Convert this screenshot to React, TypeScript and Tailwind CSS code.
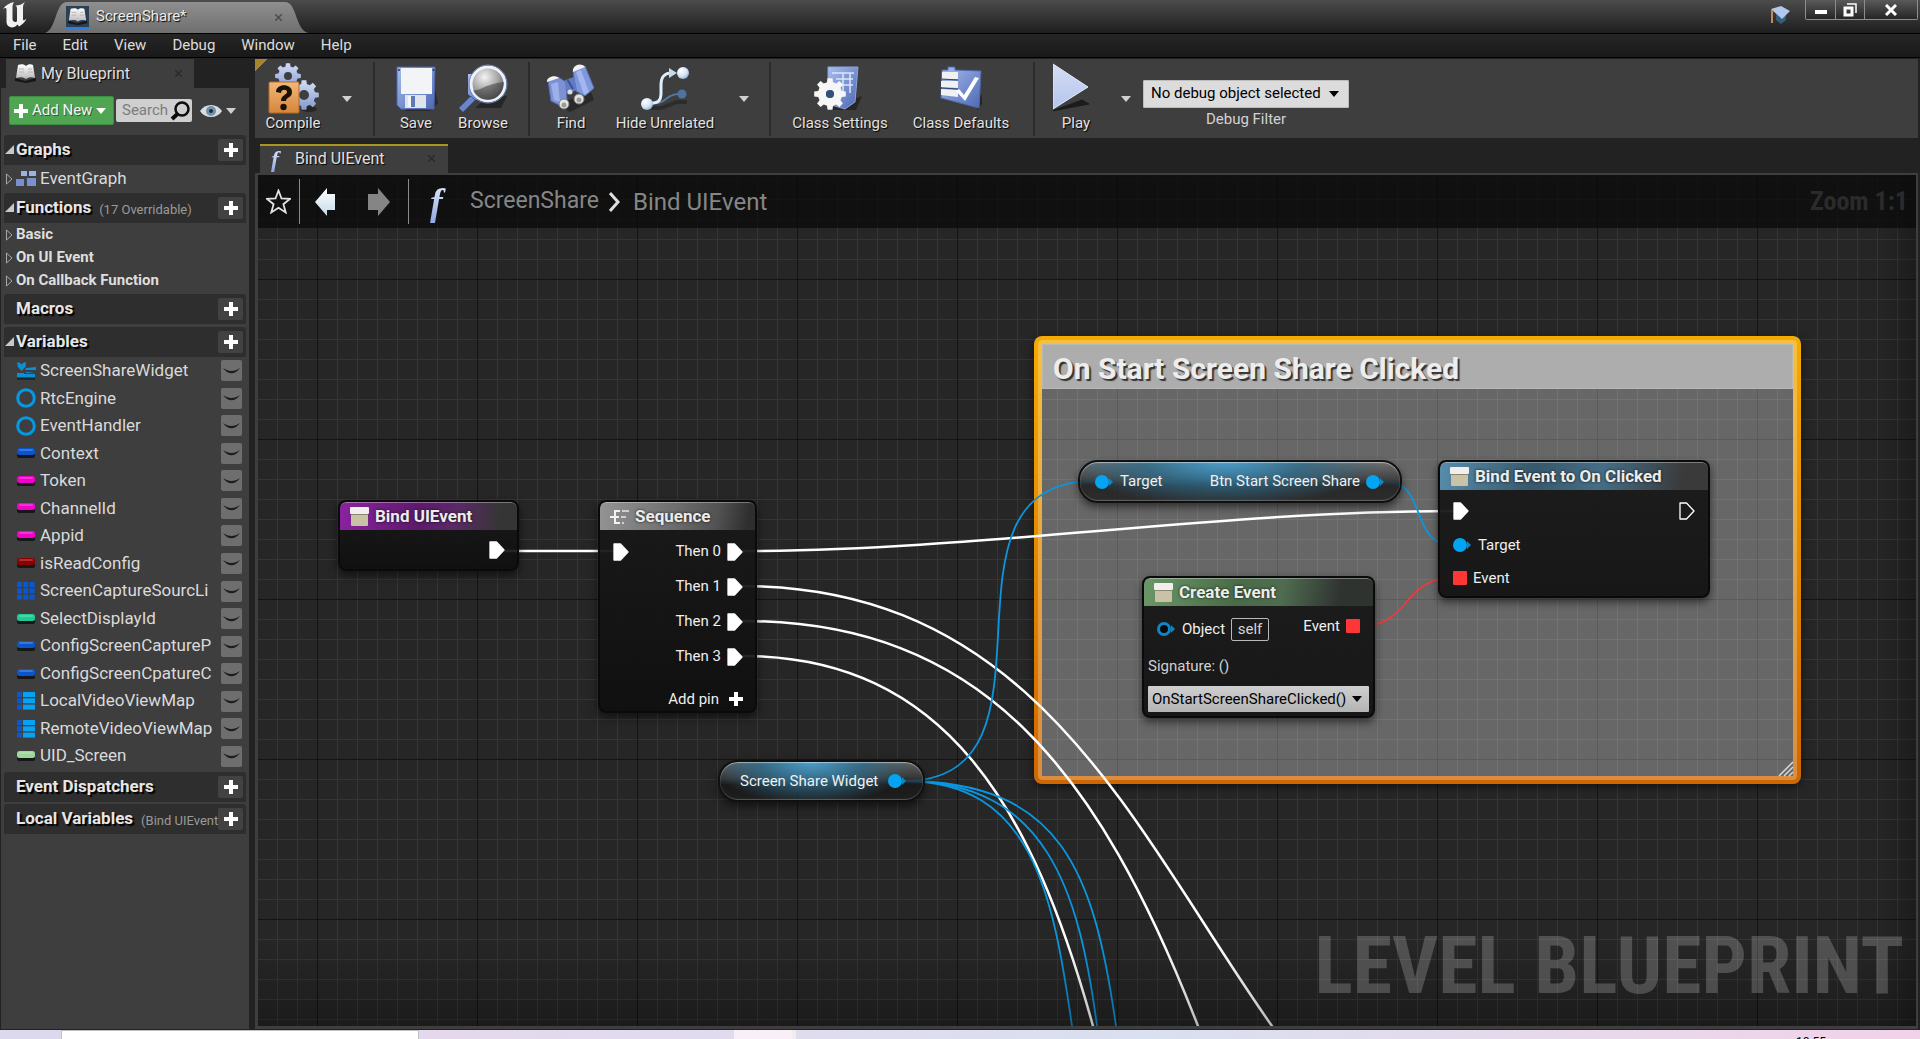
import type { ReactNode } from "react";

/* ---------- small drawings ---------- */

function gearPath(cx: number, cy: number, outer: number, inner: number, teeth: number) {
  const step = (Math.PI * 2) / teeth;
  const at = (r: number, a: number) => `${(cx + r * Math.cos(a)).toFixed(2)} ${(cy + r * Math.sin(a)).toFixed(2)}`;
  let d = "";
  for (let i = 0; i < teeth; i++) {
    const a = i * step - Math.PI / 2;
    d += `${i === 0 ? "M" : "L"}${at(inner, a - step * 0.32)}L${at(outer, a - step * 0.2)}L${at(outer, a + step * 0.2)}L${at(inner, a + step * 0.32)}`;
  }
  return d + "Z";
}

function Gear({ cx, cy, r, hole, fill }: { cx: number; cy: number; r: number; hole: number; fill: string }) {
  const h = `M${cx - hole} ${cy}a${hole} ${hole} 0 1 0 ${hole * 2} 0a${hole} ${hole} 0 1 0 ${-hole * 2} 0Z`;
  return <path d={gearPath(cx, cy, r, r * 0.76, 8) + h} fillRule="evenodd" fill={fill} />;
}

function Defs() {
  return (
    <svg className="absolute size-0" aria-hidden="true">
      <defs>
        <linearGradient id="steel" x1="0" y1="0" x2="0" y2="1">
          <stop offset="0" stopColor="#d3def6" />
          <stop offset="1" stopColor="#8399d0" />
        </linearGradient>
        <linearGradient id="playfill" x1="0" y1="0" x2="0" y2="1">
          <stop offset="0" stopColor="#d5def4" />
          <stop offset="1" stopColor="#b3c4ec" />
        </linearGradient>
        <linearGradient id="blueprint" x1="0" y1="0" x2="1" y2="1">
          <stop offset="0" stopColor="#a9bdf0" />
          <stop offset="1" stopColor="#4d68b4" />
        </linearGradient>
        <linearGradient id="orange" x1="0" y1="0" x2="0" y2="1">
          <stop offset="0" stopColor="#f3b878" />
          <stop offset="1" stopColor="#d5853b" />
        </linearGradient>
        <linearGradient id="page" x1="0" y1="0" x2="0" y2="1">
          <stop offset="0" stopColor="#ffffff" />
          <stop offset="1" stopColor="#b9b9b9" />
        </linearGradient>
        <linearGradient id="ice" x1="0" y1="0" x2="0" y2="1">
          <stop offset="0" stopColor="#ffffff" />
          <stop offset="1" stopColor="#c4dbe8" />
        </linearGradient>
        <radialGradient id="lens" cx="0.4" cy="0.3" r="0.8">
          <stop offset="0" stopColor="#f4f4f4" />
          <stop offset="0.5" stopColor="#a5a5a5" />
          <stop offset="1" stopColor="#444444" />
        </radialGradient>
        <radialGradient id="ball" cx="0.35" cy="0.3" r="0.8">
          <stop offset="0" stopColor="#ffffff" />
          <stop offset="0.6" stopColor="#d3e3f5" />
          <stop offset="1" stopColor="#7fa0c8" />
        </radialGradient>
      </defs>
    </svg>
  );
}

const CompileIcon = () => (
  <svg width="52" height="52" viewBox="0 0 52 52">
    <ellipse cx="42" cy="47" rx="8" ry="3" fill="#1c1c1c" opacity="0.7" />
    <Gear cx={21} cy={14} r={13} hole={4} fill="url(#steel)" />
    <Gear cx={37} cy={33} r={15} hole={5} fill="url(#steel)" />
    <rect x="2" y="20" width="30" height="31" rx="1" fill="url(#orange)" stroke="#b06a28" />
    <path d="M9 30c0-9 16-9 16 0c0 6-6 5-6 9h-5c0-6 6-6 6-9c0-3-6-3-6 1z" fill="#1a1208" />
    <circle cx="16.500" cy="45" r="3.200" fill="#1a1208" />
  </svg>
);

const SaveIcon = () => (
  <svg width="48" height="52" viewBox="-1 1 48 52">
    <path d="M40 20l5 22-8 8H12z" fill="#1c1c1c" opacity="0.6" />
    <path d="M4 6h38l-1 42H8l-4-4z" fill="url(#blueprint)" stroke="#4c64a8" />
    <path d="M8 7h31v26H8z" fill="#f3f4f6" />
    <path d="M12 34h21v13H12z" fill="#dfe3ea" />
    <path d="M15 35h7v11h-7z" fill="#6178b6" />
    <path d="M15 35h3v11h-3z" fill="#f3f4f6" />
    <circle cx="6" cy="9" r="1" fill="#24325e" />
    <circle cx="40.500" cy="9" r="1" fill="#24325e" />
  </svg>
);

const BrowseIcon = () => (
  <svg width="52" height="52" viewBox="0 0 52 52">
    <path d="M34 32l16 2-6 12H18z" fill="#1c1c1c" opacity="0.7" />
    <path d="M11 12h37l-1 22-30 4-6-6z" fill="url(#blueprint)" />
    <path d="M2 46L14 34l4 4L6 50z" fill="#6d86c8" stroke="#48609f" />
    <circle cx="31" cy="22" r="17" fill="url(#lens)" stroke="#eef2fb" strokeWidth="3" />
    <circle cx="31" cy="22" r="19" fill="none" stroke="#7388bb" strokeWidth="1" />
    <path d="M16 28c6 2 12-6 31-8c0 9-6 18-16 18c-7 0-13-4-15-10z" fill="#2f2f2f" opacity="0.5" />
  </svg>
);

const FindIcon = () => (
  <svg width="52" height="52" viewBox="0 0 52 52">
    <path d="M12 42l34-12 3 8-24 12z" fill="#1c1c1c" opacity="0.6" />
    <path d="M3 18l10-3 8 5 1 19-8 4-8-4z" fill="#7b91d4" stroke="#566db0" />
    <path d="M6 22l7-2 2 20-6-2z" fill="#9db0ea" />
    <path d="M28 9l12-5 9 22-9 8-9-5z" fill="#7f97dc" stroke="#566db0" />
    <path d="M31 10l5-2 8 22-5 3z" fill="#a3b6ee" />
    <path d="M20 18l9-3 3 13-10 4z" fill="#627bc4" />
    <path d="M22 17l6 10" stroke="#3d5293" strokeWidth="2" />
    <path d="M2 20c-1-5 8-8 12-4zM28 10c-1-7 8-10 12-5z" fill="#f2f2ee" />
    <circle cx="19" cy="42" r="5" fill="#e4e4e0" stroke="#7b7b78" />
    <circle cx="34" cy="37" r="5" fill="#e4e4e0" stroke="#7b7b78" />
    <circle cx="19" cy="43" r="2.500" fill="#9a9a98" />
    <circle cx="34" cy="38" r="2.500" fill="#9a9a98" />
    <circle cx="25" cy="30" r="2.500" fill="#dcdcda" />
  </svg>
);

const HideIcon = () => (
  <svg width="52" height="52" viewBox="0 0 52 52">
    <path d="M10 46h12l16-6h10" fill="none" stroke="#222" strokeWidth="4" opacity="0.6" />
    <path d="M10 41c20 2 14-9 31-9" fill="none" stroke="#54779e" strokeWidth="2" />
    <path d="M9 41c10 1 13-2 13-10v-8c0-8 3-12 11-12" fill="none" stroke="#dff0fb" strokeWidth="3" />
    <path d="M30 6l8 5-8 5z" fill="#c4dcee" />
    <circle cx="8" cy="42" r="6" fill="url(#ball)" />
    <circle cx="44" cy="11" r="6" fill="url(#ball)" />
    <circle cx="43" cy="32" r="4.500" fill="#4f739f" />
  </svg>
);

const SettingsIcon = () => (
  <svg width="52" height="52" viewBox="0 0 52 52">
    <path d="M12 48h30l6-14z" fill="#1c1c1c" opacity="0.7" />
    <path d="M14 5h30l-3 35-10 7-17-5z" fill="url(#blueprint)" stroke="#8da3dc" />
    <path d="M18 11h22M22 17h17M24 23h15M29 11v20M36 11v20" stroke="#dbe5fb" strokeWidth="1.500" fill="none" />
    <Gear cx={16} cy={32} r={16} hole={4} fill="#f6f6f6" />
    <circle cx="16" cy="32" r="4" fill="#2f4f7c" />
  </svg>
);

const DefaultsIcon = () => (
  <svg width="52" height="52" viewBox="0 0 52 52">
    <path d="M40 44l7-12v10l-4 6z" fill="#1c1c1c" opacity="0.7" />
    <path d="M7 8h6V5h7v3l26 1-2 37-38-10z" fill="url(#blueprint)" stroke="#5169ab" />
    <path d="M7 10h16v7H7zM6 19h17v7L6 25zM6 27l17 1v7L6 33z" fill="#f1f1f1" />
    <path d="M7 17l16 1M6 26l17 1" stroke="#2f3f6e" />
    <path d="M24 27l5 6 11-18 4 1-14 23-9-10z" fill="#ffffff" />
  </svg>
);

const PlayIcon = () => (
  <svg width="46" height="52" viewBox="6 1 46 52">
    <path d="M5 50l37-7-7-4z" fill="#1c1c1c" stroke="#1c1c1c" />
    <path d="M6 3l35 23L6 48z" fill="url(#playfill)" stroke="#e2e9fa" />
  </svg>
);

const UnrealLogo = () => (
  <svg width="26" height="26" viewBox="0 0 26 26" aria-label="Unreal">
    <path
      fill="#f2f2f2"
      d="M1 7C4 3 7 1 12 0C11 2 10.500 3 10.500 5V17C10.500 19 12 20 13.500 20C14.500 20 15 19.500 15 18V7C15 5 14.500 4 13.500 3.500C17 3.500 20 2.500 23 0C21.500 2 21 3.500 21 5.500V17C21 19 22.500 18.500 24.500 16.500C23 20.500 20 22.500 17 24.500L15.500 22.500C14 24.500 12 25.500 9.500 25.500C6.500 25 4.500 23 4.500 20V7.500C4.500 5.500 3 5.500 1 7Z"
    />
  </svg>
);

const BookIcon = ({ boxed }: { boxed?: boolean }) => (
  <svg width="23" height="23" viewBox="0 0 23 23" className={boxed ? "border-b-2 border-[#2f7de0] bg-[#2c3f55]" : ""}>
    <path d="M1 16l10 3 11-3v3l-10 2-11-2z" fill="#161616" />
    <path d="M4 3c3-1 6-1 8 1v13c-3-2-6-2-10-1z" fill="url(#page)" />
    <path d="M12 4c2-2 5-2 7-1l2 13c-3-1-6-1-9 1z" fill="url(#page)" />
    <path d="M5 7h5M5 10h5M14 7h4M14 10h5" stroke="#b5b5b5" strokeWidth="1" />
  </svg>
);

const Fn = ({ className }: { className: string }) => (
  <span
    aria-hidden="true"
    className={`bg-gradient-to-b from-[#eaf1ff] to-[#8ea6e0] bg-clip-text px-1 font-['Liberation_Serif',serif] italic text-transparent ${className}`}
  >
    f
  </span>
);

const Plus = ({ className = "size-[14px]" }: { className?: string }) => (
  <svg viewBox="0 0 14 14" className={className} fill="#fff">
    <path d="M5 0h4v5h5v4H9v5H5V9H0V5h5z" />
  </svg>
);

const Caret = ({ fill = "#d0d0d0" }: { fill?: string }) => (
  <svg width="10" height="6" viewBox="0 0 10 6" fill={fill}>
    <path d="M0 0h10L5 6z" />
  </svg>
);

const Cross = () => (
  <svg width="7" height="7" viewBox="0 0 7 7" stroke="#2a2a2a" strokeWidth="1.500">
    <path d="M0 0l7 7M7 0L0 7" />
  </svg>
);

const EventBox = () => (
  <svg width="19" height="19" viewBox="0 0 19 19" className="shrink-0">
    <rect x="0" y="0" width="19" height="7" rx="1" fill="#f1efee" />
    <rect x="1" y="7" width="17" height="12" rx="1" fill="#c9c2a6" />
    <rect x="1" y="7" width="17" height="1" fill="#8d876f" />
  </svg>
);

const ExecPin = ({ hollow }: { hollow?: boolean }) => (
  <svg width="16" height="18" viewBox="0 0 16 18" className="shrink-0">
    <path d="M1 1h6.500L15 9l-7.500 8H1z" fill={hollow ? "none" : "#fff"} stroke="#fff" strokeWidth="1.300" strokeLinejoin="round" />
  </svg>
);

const ObjectPin = ({ hollow }: { hollow?: boolean }) => (
  <svg width="18" height="14" viewBox="0 0 18 14" className="shrink-0">
    {hollow ? (
      <circle cx="7" cy="7" r="5.500" fill="#0a0a0a" stroke="#0f86c6" strokeWidth="3" />
    ) : (
      <circle cx="7" cy="7" r="7" fill="#04a4f3" />
    )}
    <path d="M14 3l4 4-4 4z" fill="#0b86c4" />
  </svg>
);

const DelegatePin = () => <span className="size-[14px] shrink-0 rounded-[1px] bg-[#ff3636]" />;

/* ---------- left panel ---------- */

type VarKind = "widget" | "ring" | "pill" | "array" | "map";
const variables: { name: string; kind: VarKind; color: string }[] = [
  { name: "ScreenShareWidget", kind: "widget", color: "#0d8fd4" },
  { name: "RtcEngine", kind: "ring", color: "#0598e4" },
  { name: "EventHandler", kind: "ring", color: "#0598e4" },
  { name: "Context", kind: "pill", color: "#0a55cc" },
  { name: "Token", kind: "pill", color: "#f000c8" },
  { name: "ChannelId", kind: "pill", color: "#f000c8" },
  { name: "Appid", kind: "pill", color: "#f000c8" },
  { name: "isReadConfig", kind: "pill", color: "#8c0000" },
  { name: "ScreenCaptureSourcLi", kind: "array", color: "#0a58d0" },
  { name: "SelectDisplayId", kind: "pill", color: "#1fc995" },
  { name: "ConfigScreenCaptureP", kind: "pill", color: "#0a55cc" },
  { name: "ConfigScreenCpatureC", kind: "pill", color: "#0a55cc" },
  { name: "LocalVideoViewMap", kind: "map", color: "#0a58d0" },
  { name: "RemoteVideoViewMap", kind: "map", color: "#0a58d0" },
  { name: "UID_Screen", kind: "pill", color: "#9cd69a" },
];

function VarIcon({ kind, color }: { kind: VarKind; color: string }) {
  return (
    <svg width="20" height="20" viewBox="0 0 20 20" className="shrink-0" fill={color}>
      {kind === "widget" && (
        <>
          <path d="M1 1l3 1 1.500 1.500L7 2l3-1-.5 5L5.500 10 2 6z" />
          <path d="M10 7l10-1v3H9zM1 12h8l2-1 8 1v4H1z" />
          <path d="M8 12.500h11" stroke="#3e3e3e" />
          <path d="M1 17h18v2H1z" fill="#1d2a33" />
        </>
      )}
      {kind === "ring" && <circle cx="10" cy="10" r="8.300" fill="none" stroke={color} strokeWidth="3" />}
      {kind === "pill" && (
        <>
          <rect x="1" y="8" width="18" height="7" rx="2" fill="#171717" />
          <rect x="1" y="5" width="18" height="7" rx="2.500" />
          <rect x="3" y="6" width="14" height="2" rx="1" fill="#fff" opacity="0.2" />
        </>
      )}
      {kind === "array" &&
        [0, 1, 2].map((r) => [0, 1, 2].map((c) => <rect key={`${r}${c}`} x={1 + c * 6.3} y={1 + r * 6.3} width="5" height="5" />))}
      {kind === "map" &&
        [0, 1, 2].map((r) => (
          <g key={r}>
            <rect x="1" y={1 + r * 6.3} width="5" height="5" />
            <rect x="7" y={1 + r * 6.3} width="12" height="5" fill="#06a2f4" />
          </g>
        ))}
    </svg>
  );
}

const Open = () => (
  <svg width="9" height="10" viewBox="0 0 9 10" className="shrink-0" fill="#c8c8c8">
    <path d="M9 0v9H0z" />
  </svg>
);
const Closed = () => (
  <svg width="9" height="12" viewBox="0 0 9 12" className="shrink-0" fill="none" stroke="#a8a8a8">
    <path d="M1.500 1v10L7 6z" />
  </svg>
);

function Section({ title, note, open, className = "" }: { title: string; note?: string; open?: boolean; className?: string }) {
  return (
    <div className={`flex h-[30px] shrink-0 items-center rounded-t-[3px] bg-[#2e2e2e] pr-[3px] pl-px ${className}`}>
      <span className="flex w-[11px] shrink-0">{open && <Open />}</span>
      <h2 className="shrink-0 text-[17px] font-bold text-[#e6e6e6] [text-shadow:2px_2px_1px_#000]">{title}</h2>
      <span className="ml-2 min-w-0 flex-1 pt-1 text-[13px] whitespace-nowrap text-[#9a9a9a]">{note}</span>
      <button aria-label={`Add to ${title}`} className="grid h-[22px] w-[25px] shrink-0 place-items-center rounded-[2px] bg-[#424242]">
        <Plus />
      </button>
    </div>
  );
}

function BlueprintPanel() {
  return (
    <aside className="ml-px flex w-[248px] shrink-0 flex-col">
      <div className="ml-[5px] flex h-[29px] w-[188px] items-center bg-[#3e3e3e] px-2">
        <BookIcon />
        <span className="ml-1 flex-1 text-base text-[#e0e0e0] [text-shadow:1px_1px_1px_#000]">My Blueprint</span>
        <button aria-label="Close My Blueprint" className="mr-1">
          <Cross />
        </button>
      </div>
      <div className="flex flex-1 flex-col bg-[#3e3e3e] px-[3px] pt-2">
        <div className="mb-[10px] flex items-center pl-[5px]">
          <button className="flex h-[29px] w-[105px] items-center gap-1 rounded-[2px] border border-[#3d8f40] bg-[#4fa552] px-1 text-[15px] text-[#f4f4f4] [text-shadow:1px_1px_0_#2b5c2c]">
            <Plus />
            Add New
            <Caret fill="#fff" />
          </button>
          <label className="ml-[2px] flex h-[23px] w-[76px] items-center rounded-[2px] bg-[#cfcfcf] pr-px pl-[6px]">
            <input placeholder="Search" aria-label="Search" className="w-[48px] bg-transparent text-[15px] outline-none placeholder:text-[#7c7c7c]" />
            <svg width="20" height="20" viewBox="0 0 20 20" fill="none" stroke="#0d0d0d">
              <circle cx="12" cy="8" r="6.500" strokeWidth="2.500" />
              <path d="M8 12.500L2 18" strokeWidth="4" />
            </svg>
          </label>
          <button aria-label="View options" className="ml-2 flex items-center gap-1">
            <svg width="22" height="14" viewBox="0 0 22 14">
              <path d="M0 7C5-1 17-1 22 7C17 15 5 15 0 7Z" fill="#d9dde0" />
              <circle cx="11" cy="7" r="5" fill="#6f93ad" />
              <circle cx="11" cy="7" r="2" fill="#1c2d3a" />
            </svg>
            <Caret />
          </button>
        </div>

        <Section title="Graphs" open />
        <button className="flex h-[28px] items-center pl-px text-[17px] text-[#dadada]">
          <Closed />
          <svg width="20" height="18" viewBox="0 0 20 18" className="mr-[4px] ml-[2px]">
            <path d="M7 4h8M10 4v9M4 12h12" stroke="#34496e" fill="none" />
            <path d="M5 1h6v5H5zM13 1h7v5h-7z" fill="#9db2e2" />
            <path d="M0 9h8v7H0zM11 8h9v8h-9z" fill="#7890cc" />
          </svg>
          EventGraph
        </button>
        <Section title="Functions" note="(17 Overridable)" open />
        {["Basic", "On UI Event", "On Callback Function"].map((t) => (
          <button key={t} className="flex h-[23px] items-center gap-[2px] pl-px text-[15px] font-bold text-[#dedede]">
            <Closed />
            {t}
          </button>
        ))}
        <Section title="Macros" className="mt-[2px]" />
        <Section title="Variables" open className="mt-[3px]" />
        <ul className="grid h-[413px] auto-rows-fr">
          {variables.map((v) => (
            <li key={v.name} className="flex items-center pr-1 pl-3">
              <VarIcon kind={v.kind} color={v.color} />
              <span className="ml-1 whitespace-nowrap text-[17px] text-[#dadada]">{v.name}</span>
              <button aria-label={`Toggle visibility of ${v.name}`} className="ml-auto grid size-[21px] shrink-0 place-items-center rounded-[2px] bg-[#6e6e6e]">
                <svg width="17" height="6" viewBox="0 0 17 6" fill="#1d1d1d">
                  <path d="M0 0c6 4 11 4 17 0c-5 7-12 7-17 0z" />
                </svg>
              </button>
            </li>
          ))}
        </ul>
        <Section title="Event Dispatchers" className="mt-[2px]" />
        <Section title="Local Variables" note="(Bind UIEvent" className="mt-[2px]" />
      </div>
    </aside>
  );
}

/* ---------- toolbar ---------- */

function Tool({ label, width, children }: { label: string; width: string; children: ReactNode }) {
  return (
    <button className={`flex h-full shrink-0 flex-col items-center pt-[3px] ${width}`}>
      {children}
      <span className="text-[15px] leading-[18px] whitespace-nowrap text-[#e2e2e2] [text-shadow:1px_1px_1px_#000]">{label}</span>
    </button>
  );
}

const Divider = () => <span className="h-[74px] w-[2px] shrink-0 bg-[#2b2b2b]" />;

function Toolbar() {
  return (
    <div className="flex h-[79px] items-center bg-[linear-gradient(135deg,#a8842a_9px,transparent_9px)] bg-[#3e3e3e]">
      <Tool label="Compile" width="w-[76px]"><CompileIcon /></Tool>
      <button aria-label="Compile options" className="grid w-[32px] place-items-center"><Caret /></button>
      <span className="w-[10px]" />
      <Divider />
      <Tool label="Save" width="w-[82px]"><SaveIcon /></Tool>
      <Tool label="Browse" width="w-[52px]"><BrowseIcon /></Tool>
      <span className="w-[19px]" />
      <Divider />
      <Tool label="Find" width="w-[82px]"><FindIcon /></Tool>
      <Tool label="Hide Unrelated" width="w-[106px]"><HideIcon /></Tool>
      <button aria-label="Hide unrelated options" className="grid w-[51px] place-items-center"><Caret /></button>
      <Divider />
      <Tool label="Class Settings" width="w-[138px]"><SettingsIcon /></Tool>
      <Tool label="Class Defaults" width="w-[104px]"><DefaultsIcon /></Tool>
      <span className="w-[20px]" />
      <Divider />
      <Tool label="Play" width="w-[82px]"><PlayIcon /></Tool>
      <button aria-label="Play options" className="grid w-[18px] place-items-center"><Caret /></button>
      <div className="ml-2 flex flex-col items-center pt-[10px]">
        <span className="relative flex">
          <select id="debug" className="h-[28px] w-[206px] appearance-none rounded-[1px] border border-[#bdbdbd] bg-[#dcdcdc] px-[7px] text-[15px] text-black">
            <option>No debug object selected</option>
          </select>
          <span className="pointer-events-none absolute top-[11px] right-[10px]"><Caret fill="#000" /></span>
        </span>
        <label htmlFor="debug" className="mt-[2px] text-[15px] leading-[18px] text-[#d2d2d2]">Debug Filter</label>
      </div>
    </div>
  );
}

/* ---------- graph ---------- */

function Node({ title, icon, tint, place, children }: { title: string; icon: ReactNode; tint: string; place: string; children: ReactNode }) {
  return (
    <section className={`absolute flex flex-col overflow-hidden rounded-[8px] border-2 border-[#0a0a0a] bg-[#0e0e0e]/90 bg-gradient-to-b from-[#202020]/60 to-transparent shadow-[0_4px_8px_rgba(0,0,0,0.55)] ${place}`}>
      <header className={`flex h-[28px] shrink-0 items-center gap-[6px] rounded-t-[6px] border-t border-white/35 px-[10px] text-[17px] font-bold text-[#ececec] [text-shadow:0_0_3px_rgba(0,0,0,0.8)] ${tint}`}>
        {icon}
        {title}
      </header>
      {children}
    </section>
  );
}

const pill =
  "absolute flex items-center rounded-[20px] border-2 border-[#101010] bg-[radial-gradient(ellipse_50%_110%_at_45%_0%,#4a9cc8_0%,#2f6d8dcc_50%,transparent_100%),linear-gradient(to_bottom,#707070c8_0%,#3c3c3cc8_40%,#161616c8_60%,#1c1c1cc8_100%)] text-[15px] text-[#f0f0f0] shadow-[0_4px_8px_rgba(0,0,0,0.55),inset_0_1px_1px_rgba(255,255,255,0.5),inset_0_-1px_1px_rgba(255,255,255,0.25)]";

function Wires() {
  return (
    <svg className="absolute inset-0 size-full" fill="none" aria-hidden="true">
      <g transform="translate(-258 -175)">
        <g stroke="#fff" strokeWidth="2.500">
          <path d="M504 551H613" />
          <path d="M742 551C980 551 1215 511 1453 511" />
          <path d="M742 586C1233 586 1177 1264 1668 1264" />
          <path d="M742 621C982 621 1098 769 1198 1026l4 10" />
          <path d="M742 656C947 656 1033 810 1093 1026l3 10" />
        </g>
        <g stroke="#0a97e0" strokeWidth="1.800">
          <path d="M904 781C1077 781 919 481 1094 481" />
          <path d="M904 781C1062 781 1094 872 1116 1026l1 10" />
          <path d="M904 781C1047 781 1079 891 1097 1026l1 10" />
          <path d="M904 781C1032 781 1053 893 1072 1026l1 10" />
          <path d="M1384 481C1429 481 1408 545 1453 545" />
        </g>
        <path d="M1360 626C1412 626 1401 578 1453 578" stroke="#ea3c3c" strokeWidth="1.800" />
      </g>
    </svg>
  );
}

function Graph() {
  return (
    <div className="relative min-h-[851px] flex-1 overflow-hidden bg-[#262626] bg-[linear-gradient(to_right,#141414_1px,transparent_1px),linear-gradient(to_bottom,#141414_1px,transparent_1px),linear-gradient(to_right,#353535_1px,transparent_1px),linear-gradient(to_bottom,#353535_1px,transparent_1px)] bg-[length:160px_160px,160px_160px,20px_20px,20px_20px] bg-[position:59px_0,0_104px,19px_0,0_4px]">
      {/* comment box */}
      <section className="absolute top-[161px] left-[776px] h-[448px] w-[767px] rounded-[8px] bg-white/30 p-2 shadow-[0_3px_8px_rgba(0,0,0,0.5)]">
        <h3 className="flex h-[45px] items-center border border-[#b8b8b8] bg-[#adadad] pt-1 pl-[10px] text-[30px] font-bold text-[#ededed] [text-shadow:2px_2px_1px_#333]">
          On Start Screen Share Clicked
        </h3>
        <div className="absolute inset-0 rounded-[8px] bg-gradient-to-b from-[#f5ab00] to-[#cf6600] p-2 [mask:linear-gradient(#000_0_0)_content-box_exclude,linear-gradient(#000_0_0)]" />
        <div className="absolute inset-1 rounded-[4px] bg-white/25 p-1 [mask:linear-gradient(#000_0_0)_content-box_exclude,linear-gradient(#000_0_0)]" />
        <svg width="16" height="16" viewBox="0 0 16 16" className="absolute right-[7px] bottom-[7px]" stroke="#d8d8d8" strokeWidth="1.500">
          <path d="M1 15L15 1M6 15l9-9M11 15l4-4" />
        </svg>
      </section>

      <Wires />

      <Node title="Bind UIEvent" icon={<EventBox />} place="top-[325px] left-[80px] h-[71px] w-[181px]" tint="bg-[linear-gradient(100deg,#8a239f_0%,#5d1a6c_45%,#5a2a66_65%,#353535_90%)]">
        <div className="flex flex-1 items-center justify-end pr-[12px]">
          <ExecPin />
        </div>
      </Node>

      <Node
        title="Sequence"
        place="top-[325px] left-[340px] h-[213px] w-[159px]"
        tint="bg-[linear-gradient(100deg,#949494_0%,#707070_45%,#525252_75%,#2e2e2e_95%)]"
        icon={
          <svg width="19" height="16" viewBox="0 0 19 16" fill="none" stroke="#f2f2f2" strokeWidth="2">
            <path d="M0 8h9M5 1v14M5 2h5M5 14h5" />
            <path d="M12 2h7M11 8h5M12 14h2" stroke="#d0d0d0" />
          </svg>
        }
      >
        <div className="flex flex-1 justify-between pt-[4px] pr-[12px] pl-[13px] text-[15px] text-[#eeeeee]">
          <span className="flex h-[35px] items-center"><ExecPin /></span>
          <div className="flex flex-col items-end">
            {[0, 1, 2, 3].map((n) => (
              <span key={n} className="flex h-[35px] items-center gap-[6px]">
                Then {n}
                <ExecPin />
              </span>
            ))}
            <button className="mt-[9px] flex h-[32px] items-center gap-[10px]">
              Add pin
              <Plus />
            </button>
          </div>
        </div>
      </Node>

      <div className={`${pill} top-[585px] left-[460px] h-[42px] w-[207px] gap-[10px] pl-[20px]`}>
        Screen Share Widget
        <ObjectPin />
      </div>

      <div className={`${pill} top-[285px] left-[820px] h-[43px] w-[324px] pr-[16px] pl-[15px]`}>
        <ObjectPin />
        <span className="ml-[7px] flex-1">Target</span>
        <span className="mr-[6px]">Btn Start Screen Share</span>
        <ObjectPin />
      </div>

      <Node title="Create Event" icon={<EventBox />} place="top-[401px] left-[884px] h-[142px] w-[233px]" tint="bg-[linear-gradient(100deg,#6b9768_0%,#4a6c48_40%,#4f6c50_60%,#2f3330_85%)]">
        <div className="flex flex-col px-1 text-[15px] text-[#eeeeee]">
          <div className="flex h-[46px] items-center pr-[9px] pl-[9px]">
            <ObjectPin hollow />
            <label htmlFor="self" className="ml-[7px]">Object</label>
            <input id="self" defaultValue="self" className="ml-[6px] h-[23px] w-[38px] rounded-[2px] border border-[#b9b9b9] bg-transparent text-center text-[#d5d5d5] outline-none" />
            <span className="flex flex-1 items-center justify-end gap-[6px] pb-[6px]">
              Event
              <DelegatePin />
            </span>
          </div>
          <p className="mt-1 h-5 leading-5 text-[#d0d0d0]">Signature: ()</p>
          <span className="relative mt-[10px] flex">
            <select aria-label="Signature function" className="h-[26px] w-full appearance-none rounded-[1px] bg-gradient-to-b from-[#cfcfcf] to-[#b4b4b4] px-1 text-[15px] text-black">
              <option>OnStartScreenShareClicked()</option>
            </select>
            <span className="pointer-events-none absolute top-[10px] right-[7px]"><Caret fill="#000" /></span>
          </span>
        </div>
      </Node>

      <Node title="Bind Event to On Clicked" icon={<EventBox />} place="top-[285px] left-[1180px] h-[138px] w-[272px]" tint="bg-[linear-gradient(100deg,#578cab_0%,#38586b_35%,#456e86_60%,#3a3a3a_90%)]">
        <div className="flex flex-col px-[13px] pt-1 text-[15px] text-[#eeeeee]">
          <div className="flex h-[34px] items-center justify-between"><ExecPin /><ExecPin hollow /></div>
          <div className="flex h-[34px] items-center gap-[7px]"><ObjectPin />Target</div>
          <div className="flex h-[32px] items-center gap-[6px]"><DelegatePin />Event</div>
        </div>
      </Node>

      {/* edge vignette and watermark */}
      <div className="pointer-events-none absolute inset-0 bg-gradient-to-b from-transparent from-90% to-black/25 shadow-[inset_-30px_0_40px_-20px_rgba(0,0,0,0.35)]" />
      <p className="pointer-events-none absolute right-[12px] bottom-[14px] font-['Roboto_Condensed',sans-serif] text-[80px] leading-[92px] font-bold text-white/20">LEVEL BLUEPRINT</p>

      {/* breadcrumb bar */}
      <nav aria-label="Breadcrumb" className="relative flex h-[53px] items-center bg-[#0a0a0a]/75 px-2">
        <button aria-label="Add to favourites">
          <svg width="25" height="25" viewBox="0 0 25 25" fill="none" stroke="#e4e4e4" strokeWidth="1.800">
            <path d="M12.500 1.500l3 8 8.500.4-6.600 5.300 2.300 8.200-7.200-4.700-7.200 4.700 2.300-8.200L1 9.900l8.500-.4z" />
          </svg>
        </button>
        <span className="ml-2 h-[45px] w-px bg-[#8a8a8a]" />
        <button aria-label="Back" className="ml-[15px]">
          <svg width="21" height="28" viewBox="0 0 21 28" fill="url(#ice)"><path d="M0 14L12 0v6h8v16h-8v6z" /></svg>
        </button>
        <button aria-label="Forward" className="ml-[32px]">
          <svg width="22" height="28" viewBox="0 0 22 28" fill="#858585"><path d="M22 14L10 0v6H0v16h10v6z" /></svg>
        </button>
        <span className="ml-[18px] h-[45px] w-px bg-[#8a8a8a]" />
        <Fn className="ml-[17px] w-[30px] text-[38px] leading-[44px] font-bold" />
        <a href="#ScreenShare" className="ml-[14px] text-[23px] text-[#868686]">ScreenShare</a>
        <svg width="12" height="20" viewBox="0 0 12 20" fill="none" stroke="#dedede" strokeWidth="3" className="ml-[10px]">
          <path d="M1 1l8 9-8 9" />
        </svg>
        <a href="#Bind-UIEvent" className="ml-[12px] text-[24px] text-[#868686]">Bind UIEvent</a>
        <span className="ml-auto font-['Roboto_Condensed',sans-serif] text-[26px] font-bold text-[#2b2b2b]">Zoom 1:1</span>
      </nav>
    </div>
  );
}

/* ---------- window ---------- */

function TitleBar() {
  return (
    <header className="flex h-[34px] shrink-0 items-start border-b border-black bg-gradient-to-b from-[#4c4c4c] to-[#1f1f1f]">
      <span className="mt-[2px] ml-[2px]"><UnrealLogo /></span>
      <div className="relative mt-[2px] ml-[17px] flex h-[31px] w-[263px] items-center pl-[21px]">
        <svg viewBox="0 0 263 31" preserveAspectRatio="none" className="absolute inset-0 size-full" fill="url(#tab)">
          <defs>
            <linearGradient id="tab" x1="0" y1="0" x2="0" y2="1">
              <stop offset="0" stopColor="#8f8f8f" />
              <stop offset="1" stopColor="#6f6f6f" />
            </linearGradient>
          </defs>
          <path d="M0 31C12 27 10 0 22 0H240C252 0 250 27 263 31Z" />
        </svg>
        <span className="relative"><BookIcon boxed /></span>
        <span className="relative ml-[7px] flex-1 pb-[2px] text-[15px] text-[#ececec] [text-shadow:1px_1px_1px_#000]">ScreenShare*</span>
        <button aria-label="Close tab" className="relative mr-[26px] opacity-60"><Cross /></button>
      </div>
      <span className="flex-1" />
      <svg width="20" height="20" viewBox="0 0 20 20" className="mt-[5px] mr-[15px]">
        <path d="M6 9v6l5 4 5-4V9z" fill="#355f7e" />
        <path d="M1 4l10-3 9 5-8 8z" fill="#b3c8ee" />
        <path d="M1 5h2v13H1z" fill="#c08d56" />
      </svg>
      <div className="mr-[2px] flex h-[20px] divide-x divide-[#8d8d8d] rounded-b-[2px] border border-t-0 border-[#8d8d8d] bg-gradient-to-b from-[#5a5a5a] to-[#262626]">
        <button aria-label="Minimize" className="grid w-[30px] place-items-center pt-1"><span className="h-[4px] w-[12px] bg-white" /></button>
        <button aria-label="Restore" className="grid w-[29px] place-items-center">
          <svg width="14" height="14" viewBox="0 0 14 14" fill="none" stroke="#fff">
            <rect x="2" y="5" width="7" height="7" strokeWidth="3" />
            <path d="M4 1h9v9" strokeWidth="1.500" />
          </svg>
        </button>
        <button aria-label="Close" className="grid w-[52px] place-items-center">
          <svg width="12" height="12" viewBox="0 0 12 12" stroke="#fff" strokeWidth="3"><path d="M1 1l10 10M11 1L1 11" /></svg>
        </button>
      </div>
    </header>
  );
}

export default function App() {
  return (
    <div className="flex min-h-screen flex-col overflow-hidden bg-[#222222] font-['Roboto',sans-serif]">
      <Defs />
      <TitleBar />
      <nav aria-label="Menu" className="flex h-[24px] shrink-0 items-center gap-[26px] border-b border-black bg-gradient-to-b from-[#262626] to-[#191919] pl-[13px] text-[15px] text-[#dcdcdc]">
        {["File", "Edit", "View", "Debug", "Window", "Help"].map((m) => (
          <button key={m}>{m}</button>
        ))}
      </nav>
      <main className="flex flex-1 pt-px">
        <BlueprintPanel />
        <div className="mr-[2px] ml-[6px] flex min-w-0 flex-1 flex-col">
          <Toolbar />
          <div className="mt-[6px] ml-[5px] flex h-[29px] w-[188px] items-center border-t-2 border-[#a8971c] bg-[#3e3e3e] pb-[2px] pl-[7px]">
            <Fn className="w-[22px] text-[24px] leading-[26px] font-bold" />
            <span className="ml-[6px] flex-1 text-base text-[#e0e0e0] [text-shadow:1px_1px_1px_#000]">Bind UIEvent</span>
            <button aria-label="Close Bind UIEvent" className="mr-[13px]"><Cross /></button>
          </div>
          <div className="flex flex-1 flex-col border-2 border-b-[3px] border-l-[3px] border-[#3e3e3e]">
            <Graph />
          </div>
        </div>
      </main>
      <footer className="flex h-[10px] shrink-0 overflow-hidden border-t border-[#222] bg-gradient-to-r from-[#ecd3ec] via-[#d9e0f0] via-60% to-[#f2d2e8] text-[12px] leading-[12px] text-black">
        <span className="w-[61px] bg-[#dcd8ee]" />
        <span className="w-[358px] border border-b-0 border-[#c4c0c8] bg-white" />
        <span className="ml-[315px] w-[62px] border-r-4 border-[#f0ecf0] bg-[#f8eff8]" />
        <time className="mt-[6px] mr-[94px] ml-auto">10:55</time>
      </footer>
    </div>
  );
}
